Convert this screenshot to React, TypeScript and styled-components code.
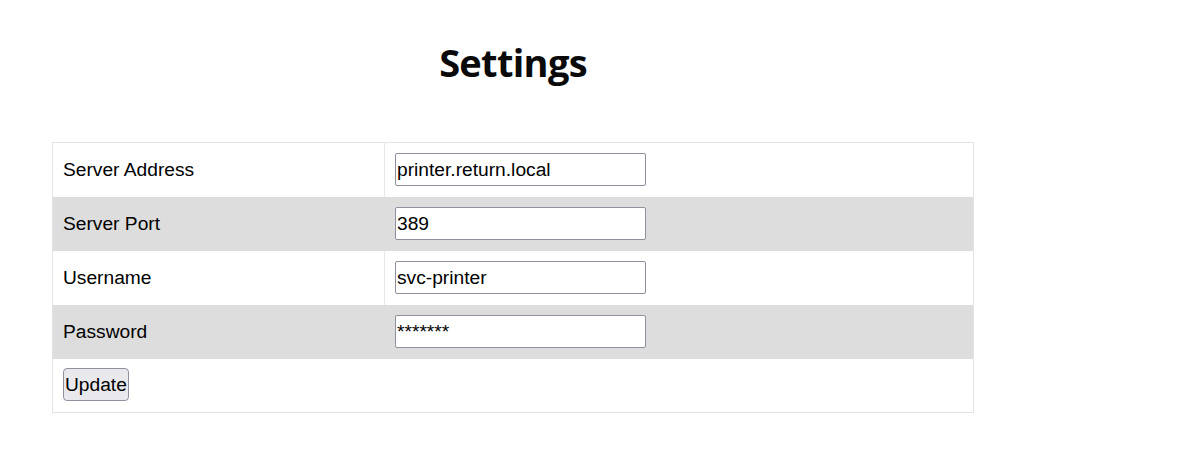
import { ReactElement } from "react";
import styled, { createGlobalStyle } from "styled-components";

const GlobalStyle = createGlobalStyle`
  html, body {
    margin: 0;
    padding: 0;
    background: #ffffff;
  }
  body {
    font-family: "Liberation Sans", Arial, sans-serif;
    color: #000000;
  }
`;

const Page = styled.div`
  padding: 39px 0 0 52px;
`;

const Panel = styled.div`
  width: 922px;
`;

const Title = styled.h1`
  margin: 0 0 57px;
  text-align: center;
  font-family: "Open Sans", "DejaVu Sans", sans-serif;
  font-weight: 700;
  font-size: 38px;
  line-height: 46px;
  letter-spacing: -0.7px;
  color: #0a0a0a;
`;

const Table = styled.table`
  width: 922px;
  border-collapse: collapse;
  border: 1px solid #e3e3e3;
  table-layout: fixed;
`;

const Row = styled.tr<{ $shaded?: boolean }>`
  height: 54px;
  background: ${(p) => (p.$shaded ? "#dddddd" : "#ffffff")};
`;

const LabelCell = styled.td<{ $shaded?: boolean }>`
  width: 311px;
  padding: 0 10px;
  font-size: 19.2px;
  border-right: 1px solid ${(p) => (p.$shaded ? "#dddddd" : "#e8e8e8")};
  vertical-align: middle;
`;

const FieldCell = styled.td`
  padding: 0 10px;
  vertical-align: middle;
`;

const ActionCell = styled.td`
  padding: 0 10px;
  vertical-align: middle;
`;

const Field = styled.input`
  display: block;
  box-sizing: border-box;
  width: 251px;
  height: 33px;
  margin: 0;
  padding: 1px 1px;
  border: 1px solid #8f8f9d;
  border-radius: 2px;
  background: #ffffff;
  font-family: "Liberation Sans", Arial, sans-serif;
  font-size: 19.2px;
  color: #000000;
  outline: none;
`;

const Button = styled.button`
  display: block;
  box-sizing: border-box;
  height: 33px;
  margin: -1px 0 0;
  padding: 1px 1px;
  border: 1px solid #8f8f9d;
  border-radius: 4px;
  background: #e9e9ed;
  font-family: "Liberation Sans", Arial, sans-serif;
  font-size: 19.2px;
  color: #000000;
`;

const settings = [
  { label: "Server Address", value: "printer.return.local" },
  { label: "Server Port", value: "389" },
  { label: "Username", value: "svc-printer" },
  { label: "Password", value: "*******" },
];

export default function App(): ReactElement {
  return (
    <>
      <GlobalStyle />
      <Page>
        <Panel>
          <Title>Settings</Title>
          <Table>
            <tbody>
              {settings.map((s, i) => (
                <Row key={s.label} $shaded={i % 2 === 1}>
                  <LabelCell $shaded={i % 2 === 1}>{s.label}</LabelCell>
                  <FieldCell>
                    <Field type="text" defaultValue={s.value} />
                  </FieldCell>
                </Row>
              ))}
              <Row>
                <ActionCell colSpan={2}>
                  <Button type="button">Update</Button>
                </ActionCell>
              </Row>
            </tbody>
          </Table>
        </Panel>
      </Page>
    </>
  );
}
